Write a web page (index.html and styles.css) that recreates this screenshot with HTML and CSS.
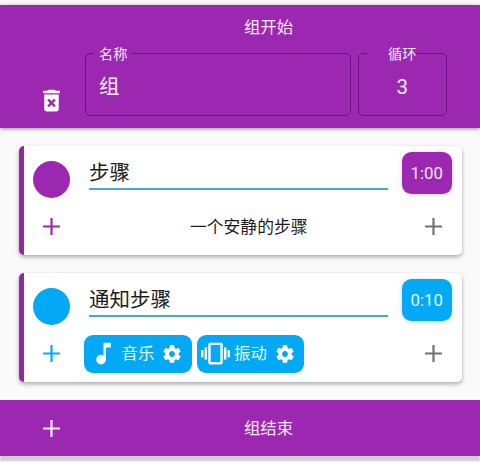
FILE: index.html
```html
<!DOCTYPE html>
<html lang="zh-CN">
<head>
<meta charset="utf-8">
<title>组</title>
<link rel="stylesheet" href="styles.css">
</head>
<body>
<svg class="defs" aria-hidden="true">
  <symbol id="plus" viewBox="0 0 24 24"><path d="M19 12.900h-6.100V19h-1.800v-6.100H5v-1.800h6.100V5h1.800v6.100H19z"/></symbol>
  <symbol id="trash" viewBox="0 0 24 24"><path d="M6 19c0 1.100.9 2 2 2h8c1.100 0 2-.9 2-2V7H6v12zm2.460-7.120l1.410-1.410L12 12.590l2.120-2.120 1.410 1.410L13.410 14l2.120 2.120-1.410 1.410L12 15.410l-2.120 2.120-1.410-1.410L10.590 14l-2.130-2.120zM15.500 4l-1-1h-5l-1 1H5v2h14V4z"/></symbol>
  <symbol id="note" viewBox="0 0 24 24"><path d="M12 3v10.550c-.59-.34-1.270-.55-2-.55-2.210 0-4 1.790-4 4s1.790 4 4 4 4-1.790 4-4V7h4V3h-6z"/></symbol>
  <symbol id="vibration" viewBox="0 0 24 24"><path d="M0 15h2V9H0v6zm3 2h2V7H3v10zm19-8v6h2V9h-2zm-3 8h2V7h-2v10zM16.500 3h-9C6.670 3 6 3.670 6 4.500v15c0 .83.67 1.500 1.500 1.500h9c.83 0 1.500-.67 1.500-1.500v-15c0-.83-.67-1.500-1.500-1.500zM16 19H8V5h8v14z"/></symbol>
  <symbol id="gear" viewBox="0 0 24 24"><path d="M19.140 12.940c.04-.3.06-.61.06-.94 0-.32-.02-.64-.07-.94l2.030-1.580c.18-.14.23-.41.12-.61l-1.920-3.320c-.12-.22-.37-.29-.59-.22l-2.390.96c-.5-.38-1.030-.7-1.620-.94l-.36-2.540c-.04-.24-.24-.41-.48-.41h-3.840c-.24 0-.43.17-.47.41l-.36 2.540c-.59.24-1.130.57-1.620.94l-2.390-.96c-.22-.08-.47 0-.59.22L2.740 8.870c-.12.21-.08.47.12.61l2.030 1.580c-.05.3-.09.63-.09.94s.02.64.07.94l-2.030 1.580c-.18.14-.23.41-.12.61l1.920 3.320c.12.22.37.29.59.22l2.390-.96c.5.38 1.030.7 1.620.94l.36 2.540c.05.24.24.41.48.41h3.840c.24 0 .44-.17.47-.41l.36-2.540c.59-.24 1.130-.56 1.620-.94l2.390.96c.22.08.47 0 .59-.22l1.920-3.320c.12-.22.07-.47-.12-.61l-2.010-1.580zM12 15.200c-1.770 0-3.200-1.430-3.200-3.200s1.430-3.200 3.200-3.200 3.200 1.430 3.200 3.200-1.430 3.200-3.200 3.200z"/></symbol>
</svg>

<header class="group-start">
  <div class="group-title">组开始</div>
  <div class="group-row">
    <svg class="icon trash"><use href="#trash"/></svg>
    <fieldset class="field name"><legend>名称</legend><div class="value">组</div></fieldset>
    <fieldset class="field loops"><legend>循环</legend><div class="value">3</div></fieldset>
  </div>
</header>

<main class="steps">
  <section class="card purple">
    <div class="top">
      <span class="dot"></span>
      <div class="step-name">步骤</div>
      <div class="time">1:00</div>
    </div>
    <div class="bottom">
      <svg class="icon add"><use href="#plus"/></svg>
      <div class="quiet">一个安静的步骤</div>
      <svg class="icon more"><use href="#plus"/></svg>
    </div>
  </section>
  <section class="card blue">
    <div class="top">
      <span class="dot"></span>
      <div class="step-name">通知步骤</div>
      <div class="time">0:10</div>
    </div>
    <div class="bottom">
      <svg class="icon add"><use href="#plus"/></svg>
      <div class="chips">
        <div class="chip"><svg class="icon"><use href="#note"/></svg><span>音乐</span><svg class="gear"><use href="#gear"/></svg></div>
        <div class="chip"><svg class="icon"><use href="#vibration"/></svg><span>振动</span><svg class="gear"><use href="#gear"/></svg></div>
      </div>
      <svg class="icon more"><use href="#plus"/></svg>
    </div>
  </section>
</main>

<footer class="group-end">
  <svg class="icon"><use href="#plus"/></svg>
  <div class="end-title">组结束</div>
</footer>
</body>
</html>
```
FILE: styles.css
```css
* { box-sizing: border-box; }
body {
  margin: 0;
  padding-top: 5px;
  height: 462px;
  overflow: hidden;
  background: #fafafa;
  color: #1c1c1c;
  font: 16.400px/24px Roboto, "Noto Sans CJK SC", sans-serif;
}
svg { display: block; fill: currentColor; flex: none; }
.defs { display: none; }
.icon { width: 29px; height: 29px; }

.group-start {
  height: 122.500px;
  padding-top: 10px;
  background: #9c27b0;
  color: #fdeaff;
  box-shadow: 0 1px 4px rgba(0, 0, 0, .4);
}
.group-title { padding-top: 1px; padding-left: 57px; text-align: center; }
.group-row { display: flex; padding-left: 37px; margin-top: 3px; }
.trash { margin-top: 42.500px; color: #fff; }
.field {
  min-width: 0;
  height: 73px;
  margin: 0;
  padding: 0;
  border: 1.500px solid #6d1380;
  border-radius: 5px;
}
.field legend { font-size: 14.200px; line-height: 20px; padding-top: 1px; }
.name { width: 266px; margin-left: 19px; }
.name legend { margin-left: 8px; padding-left: 5px; padding-right: 4px; }
.name .value { padding-left: 13px; }
.loops { width: 88.500px; margin-left: 7px; }
.loops legend { margin-left: 8px; padding-left: 21px; padding-right: 0; }
.loops .value { text-align: center; }
.value { font-size: 20.500px; line-height: 28px; margin-top: 9px; }

.steps {
  display: grid;
  grid-template-columns: minmax(0, 1fr);
  gap: 18px;
  padding: 18.500px 18.500px 0;
}
.card {
  height: 109px;
  padding: 6px 9.500px 0 9px;
  border-left: 5px solid #9228a6;
  border-radius: 5px;
  background: #fff;
  box-shadow: 0 2px 4px rgba(0, 0, 0, .33);
}
.purple { --accent: #9c27b0; --label: #fdeaff; }
.blue { --accent: #03a9f4; --label: #e5ffff; }
.top { display: flex; height: 42px; }
.dot { flex: none; width: 37px; height: 37px; margin-top: 8.500px; border-radius: 50%; background: var(--accent); }
.step-name {
  flex: none;
  width: 298.500px;
  height: 37.500px;
  margin-left: 19.500px;
  border-bottom: 2px solid #4aa8cd;
  font-size: 20.500px;
  line-height: 42px;
}
.time {
  width: 50.500px;
  height: 41.500px;
  margin-left: auto;
  border-radius: 9.500px;
  background: var(--accent);
  color: var(--label);
  font-size: 16.800px;
  line-height: 43px;
  text-align: center;
  box-shadow: 0 1px 4px rgba(0, 0, 0, .2);
}
.bottom { display: flex; align-items: center; height: 37.500px; margin-top: 14px; padding: 0 4.500px; }
.add { color: var(--accent); }
.more { color: #707070; margin-left: auto; }
.quiet { flex: 1; text-align: center; padding-left: 13px; font-size: 16.800px; }
.chips { display: flex; gap: 5px; margin-left: 18px; }
.chip {
  display: flex;
  align-items: center;
  width: 107.500px;
  height: 37.500px;
  padding: 0 8.500px 0 4.500px;
  border-radius: 9px;
  background: var(--accent);
  color: #fff;
}
.chip span { margin-left: 4px; color: var(--label); }
.gear { width: 22px; height: 22px; margin-left: auto; }

.group-end {
  display: flex;
  align-items: center;
  height: 56px;
  margin-top: 18px;
  padding-left: 37px;
  background: #9c27b0;
  color: #fdeaff;
  box-shadow: 0 5px 2px #d3cad4;
}
.end-title { flex: 1; padding-top: 2px; margin-left: -9px; text-align: center; }
```
